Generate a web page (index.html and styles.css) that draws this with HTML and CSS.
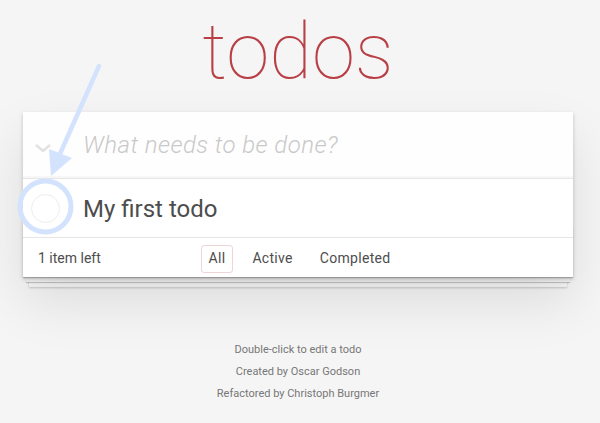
FILE: index.html
```html
<!DOCTYPE html>
<html lang="en">
<head>
<meta charset="utf-8">
<title>todos</title>
<link rel="stylesheet" href="styles.css">
</head>
<body>
<section class="todoapp">
  <header class="header">
    <h1 class="title">todos</h1>
  </header>
  <div class="card">
    <div class="new-row">
      <span class="toggle-all" aria-hidden="true">
        <svg width="20" height="12" viewBox="0 0 20 12"><polyline points="3,3 10,9 17,3" fill="none" stroke="#e1e1e1" stroke-width="2.4"/></svg>
      </span>
      <div class="new-todo">What needs to be done?</div>
    </div>
    <ul class="todo-list">
      <li class="todo">
        <span class="toggle"></span>
        <label class="todo-label">My first todo</label>
      </li>
    </ul>
    <footer class="footer">
      <span class="count">1 item left</span>
      <ul class="filters">
        <li><a class="filter selected">All</a></li>
        <li><a class="filter">Active</a></li>
        <li><a class="filter">Completed</a></li>
      </ul>
      <span></span>
    </footer>
  </div>
  <footer class="info">
    <p>Double-click to edit a todo</p>
    <p>Created by Oscar Godson</p>
    <p>Refactored by Christoph Burgmer</p>
  </footer>
</section>
<svg class="hint" width="600" height="423" viewBox="0 0 600 423" aria-hidden="true">
  <line x1="99" y1="66" x2="59" y2="156" stroke="#d3e3fd" stroke-width="4.5" stroke-linecap="round"/>
  <polygon points="49,149 72,158 51,176" fill="#d3e3fd"/>
  <circle cx="45.5" cy="206.5" r="25.5" fill="none" stroke="#d3e3fd" stroke-width="5"/>
</svg>
</body>
</html>
```
FILE: styles.css
```css
html, body {
  margin: 0;
  padding: 0;
}
body {
  background: #f5f5f5;
  color: #4d4d4d;
  font-family: Roboto, "Liberation Sans", sans-serif;
  font-weight: 300;
  font-size: 14px;
  line-height: 1.4;
  position: relative;
  height: 423px;
  overflow: hidden;
}
.todoapp {
  width: 550px;
  margin-left: 23px;
}
.header {
  padding-top: 12px;
  height: 100px;
}
.title {
  margin: 0;
  font-size: 78px;
  line-height: 80px;
  font-weight: 100;
  color: #b83f45;
  text-align: center;
}
.card {
  background: #fff;
  position: relative;
  box-shadow: 0 2px 4px rgba(0,0,0,0.2), 0 25px 50px rgba(0,0,0,0.1);
}
.new-row {
  position: relative;
  height: 66px;
  display: flex;
  align-items: center;
  background: rgba(0,0,0,0.003);
  box-shadow: inset 0 -2px 1px rgba(0,0,0,0.03);
}
.toggle-all {
  width: 60px;
  display: flex;
  justify-content: center;
  padding-top: 6px;
  margin-left: -10px;
  margin-right: 10px;
}
.new-todo {
  font-size: 24px;
  font-style: italic;
  color: #c9c9c9;
  line-height: 34px;
  letter-spacing: 0.45px;
}
.todo-list {
  list-style: none;
  margin: 0;
  padding: 0;
  border-top: 1px solid #e6e6e6;
}
.todo {
  height: 58px;
  display: flex;
  align-items: center;
}
.toggle {
  width: 29px;
  height: 29px;
  box-sizing: border-box;
  border: 1px solid #ededed;
  border-radius: 50%;
  margin-left: 8px;
  margin-right: 23px;
}
.todo-label {
  font-size: 24px;
  line-height: 29px;
  color: #4d4d4d;
  font-weight: 400;
  margin-left: -8px;
  padding-left: 8px;
  padding-top: 2px;
}
.footer {
  position: relative;
  border-top: 1px solid #e6e6e6;
  height: 40px;
  padding: 3px 15px 0;
  box-sizing: border-box;
  display: grid;
  grid-template-columns: 1fr auto 1fr;
  align-items: center;
  color: #4d4d4d;
  font-weight: 400;
}
.footer::before {
  content: "";
  position: absolute;
  left: 0;
  right: 0;
  bottom: 0;
  height: 50px;
  overflow: hidden;
  z-index: -1;
  box-shadow: 0 1px 1px rgba(0,0,0,0.2),
              0 8px 0 -3px #f6f6f6,
              0 9px 1px -3px rgba(0,0,0,0.2),
              0 16px 0 -6px #f6f6f6,
              0 17px 2px -6px rgba(0,0,0,0.2);
}
.count {
  font-size: 14px;
}
.filters {
  list-style: none;
  margin: 0;
  padding: 0;
  display: flex;
  gap: 11px;
  margin-left: 3px;
}
.filter {
  display: block;
  padding: 3px 7px;
  border: 1px solid transparent;
  border-radius: 3px;
  font-size: 14px;
  color: #4d4d4d;
  letter-spacing: 0.3px;
}
.filter.selected {
  border-color: rgba(175,47,47,0.2);
}
.info {
  margin-top: 67px;
  text-align: center;
  color: #777;
  font-size: 11px;
  font-weight: 400;
}
.info p {
  margin: 0 0 11px;
  line-height: 11px;
}
.hint {
  position: absolute;
  left: 0;
  top: 0;
  pointer-events: none;
}
```
